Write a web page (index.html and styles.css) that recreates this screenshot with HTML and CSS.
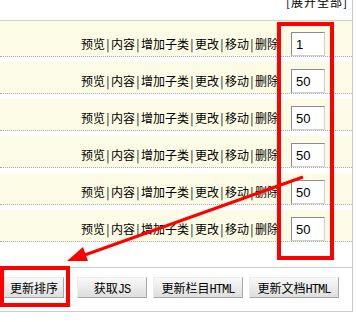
FILE: index.html
```html
<!DOCTYPE html>
<html lang="zh-CN">
<head>
    <meta charset="UTF-8">
    <title>栏目管理</title>
    <link rel="stylesheet" href="styles.css">
</head>
<body>
    <div class="page">
        <div class="panel">
            <div class="top"><span class="expand">[展开全部]</span></div>

            <div class="list">
                <div class="row">
                    <div class="ops">预览<i>|</i>内容<i>|</i>增加子类<i>|</i>更改<i>|</i>移动<i>|</i>删除</div>
                    <input class="order" type="text" value="1">
                </div>
                <div class="row">
                    <div class="ops">预览<i>|</i>内容<i>|</i>增加子类<i>|</i>更改<i>|</i>移动<i>|</i>删除</div>
                    <input class="order" type="text" value="50">
                </div>
                <div class="row">
                    <div class="ops">预览<i>|</i>内容<i>|</i>增加子类<i>|</i>更改<i>|</i>移动<i>|</i>删除</div>
                    <input class="order" type="text" value="50">
                </div>
                <div class="row">
                    <div class="ops">预览<i>|</i>内容<i>|</i>增加子类<i>|</i>更改<i>|</i>移动<i>|</i>删除</div>
                    <input class="order" type="text" value="50">
                </div>
                <div class="row">
                    <div class="ops">预览<i>|</i>内容<i>|</i>增加子类<i>|</i>更改<i>|</i>移动<i>|</i>删除</div>
                    <input class="order" type="text" value="50">
                </div>
                <div class="row">
                    <div class="ops">预览<i>|</i>内容<i>|</i>增加子类<i>|</i>更改<i>|</i>移动<i>|</i>删除</div>
                    <input class="order" type="text" value="50">
                </div>
            </div>

            <div class="bar">
                <button class="btn btn-sort">更新排序</button>
                <button class="btn btn-js">获取<span class="lat">JS</span></button>
                <button class="btn btn-cat">更新栏目<span class="lat">HTML</span></button>
                <button class="btn btn-doc">更新文档<span class="lat">HTML</span></button>
            </div>
        </div>

        <!-- red annotations drawn over the screenshot -->
        <div class="mark mark-order"></div>
        <div class="mark mark-btn"></div>
        <svg class="arrow" width="356" height="322" viewBox="0 0 356 322">
            <line x1="303" y1="177" x2="82" y2="256" stroke="#f00" stroke-width="3"/>
            <polygon points="67,261 88,261 83,247" fill="#f00"/>
        </svg>
    </div>
</body>
</html>
```

FILE: styles.css
```css
* {
    box-sizing: border-box;
}

body {
    margin: 0;
    font-family: "Noto Sans CJK SC", "Noto Sans", sans-serif;
    font-size: 12px;
    color: #000;
    background: #fff;
    overflow: hidden;
}

.page {
    position: relative;
    width: 356px;
    height: 322px;
}

.panel {
    width: 353px;
    border-right: 1px solid #c9c9c9;
}

.top {
    display: flex;
    justify-content: flex-end;
    align-items: flex-start;
    height: 21px;
    padding-right: 4px;
    border-bottom: 1px solid #cfcfd4;
}

.expand {
    margin-top: -4px;
    line-height: 12px;
    letter-spacing: 1px;
}

.row {
    display: flex;
    justify-content: flex-end;
    align-items: flex-end;
    height: 37px;
    padding-right: 27px;
    border-top: 5px solid #fff;
    border-bottom: 1px dotted #aaa;
    background: #fcfce6;
}

.row:first-child {
    height: 36px;
    border-top: 0;
}

.ops {
    line-height: 24px;
    white-space: nowrap;
}

.ops i {
    display: inline-block;
    width: 6px;
    font-style: normal;
    text-align: center;
}

.order {
    width: 34px;
    height: 24px;
    margin: 0 0 0 12px;
    padding: 0 0 0 4px;
    border: 1px solid;
    border-color: #8c8c8c #cfcfcf #cfcfcf #8c8c8c;
    background: #fff;
    font: 13px "Liberation Sans", sans-serif;
    color: #000;
    outline: none;
}

.bar {
    display: flex;
    align-items: flex-start;
    height: 45px;
    margin-top: 25px;
    padding: 9px 0 0 4px;
    border-top: 1px solid #ccc;
    border-bottom: 1px solid #ccc;
}

.btn {
    height: 21px;
    padding: 0;
    border: 1px solid;
    border-color: #ededed #a9a9a9 #a9a9a9 #ededed;
    background: linear-gradient(#f8f8f8, #dedede);
    font-family: "Noto Sans CJK SC", sans-serif;
    font-size: 12px;
    line-height: 19px;
    color: #000;
}

.btn .lat {
    font-family: "Liberation Mono", monospace;
    font-size: 12px;
    letter-spacing: -1px;
}

.btn-sort {
    width: 60px;
}

.btn-js {
    width: 70px;
    margin-left: 13px;
}

.btn-cat,
.btn-doc {
    width: 90px;
    margin-left: 6px;
}

.mark {
    position: absolute;
    border: 4px solid #f00;
}

.mark-order {
    left: 277px;
    top: 22px;
    width: 57px;
    height: 238px;
}

.mark-btn {
    left: 0;
    top: 266px;
    width: 70px;
    height: 41px;
}

.arrow {
    position: absolute;
    left: 0;
    top: 0;
    pointer-events: none;
}
```
